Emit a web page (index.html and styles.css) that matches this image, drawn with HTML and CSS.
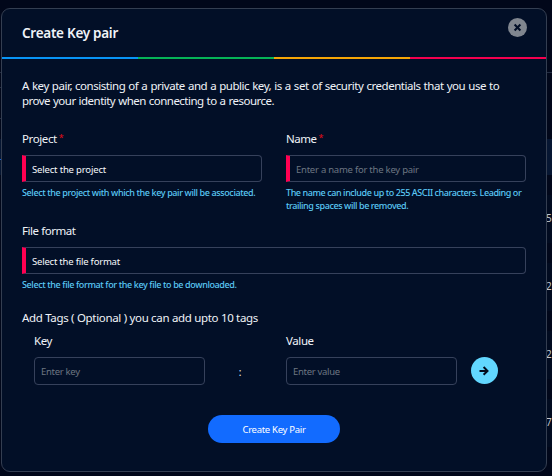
FILE: index.html
```html
<!DOCTYPE html>
<html lang="en">
<head>
<meta charset="utf-8">
<title>Create Key pair</title>
<link rel="stylesheet" href="styles.css">
</head>
<body>
<div class="backdrop">
  <div class="rule first"></div>
  <div class="rule second"></div>
  <div class="rule third"></div>
  <div class="band"></div>
  <div class="rows">
    <div class="row">5</div>
    <div class="row">2</div>
    <div class="row">2</div>
    <div class="row">7</div>
  </div>
</div>
<main class="modal">
  <header class="header">
    <h1 class="title"><span>Create Key pair</span></h1>
    <button class="close" aria-label="Close">
      <svg width="19" height="19" viewBox="0 0 19 19"><path d="M6.6 6.6l5.8 5.8M12.4 6.6l-5.8 5.8" stroke="#020f27" stroke-width="2.1"/></svg>
    </button>
  </header>
  <div class="stripe"><i class="blue"></i><i class="green"></i><i class="amber"></i><i class="red"></i></div>
  <div class="body">
    <p class="intro"><span class="intro-a">A key pair, consisting of a private and a public key, is a set of security credentials that you use to</span><br><span class="intro-b">prove your identity when connecting to a resource.</span></p>
    <div class="pair">
      <div class="field">
        <div class="label"><span class="l-project">Project</span><sup>*</sup></div>
        <div class="input required"><span class="v-project">Select the project</span></div>
        <div class="help"><span class="h-project">Select the project with which the key pair will be associated.</span></div>
      </div>
      <div class="field">
        <div class="label"><span class="l-name">Name</span><sup>*</sup></div>
        <div class="input required hint"><span class="v-name">Enter a name for the key pair</span></div>
        <div class="help"><span class="h-name">The name can include up to 255 ASCII characters. Leading or</span><br><span class="h-name2">trailing spaces will be removed.</span></div>
      </div>
    </div>
    <div class="field format">
      <div class="label"><span class="l-format">File format</span></div>
      <div class="input required"><span class="v-format">Select the file format</span></div>
      <div class="help"><span class="h-format">Select the file format for the key file to be downloaded.</span></div>
    </div>
    <div class="tags-title"><span class="l-tags">Add Tags ( Optional ) you can add upto 10 tags</span></div>
    <div class="tags">
      <div class="tag-field">
        <div class="label"><span class="l-key">Key</span></div>
        <div class="input hint"><span class="v-key">Enter key</span></div>
      </div>
      <span class="colon">:</span>
      <div class="tag-field">
        <div class="label"><span class="l-value">Value</span></div>
        <div class="input hint"><span class="v-value">Enter value</span></div>
      </div>
      <button class="add" aria-label="Add tag">
        <svg width="27" height="27" viewBox="0 0 27 27"><path d="M8.5 13.9h8M12.6 10l3.9 3.9-3.9 3.9" fill="none" stroke="#020b1c" stroke-width="2"/></svg>
      </button>
    </div>
    <button class="submit"><span class="l-submit">Create Key Pair</span></button>
  </div>
</main>
</body>
</html>
```
FILE: styles.css
```css
* { box-sizing: border-box; }
body {
  margin: 0;
  width: 552px;
  height: 476px;
  overflow: hidden;
  padding: 8px 0 0 1px;
  background: #01071a;
  color: #f0f3f8;
  font-family: "Noto Sans", "Open Sans", sans-serif;
}
span { white-space: nowrap; }
button { border: 0; padding: 0; font-family: inherit; }
.backdrop { position: absolute; inset: 0; overflow: hidden; }
.rule { position: absolute; height: 1px; background: #232d43; }
.first { top: 72px; left: 0; width: 552px; }
.second { top: 87px; left: 0; width: 2px; }
.third { top: 118px; left: 0; width: 2px; }
.band { position: absolute; top: 139px; left: 0; right: 0; height: 36px; background: #061632; }
.band::after { content: ""; position: absolute; top: 20px; left: 0; width: 2px; height: 1px; background: #1263d8; }
.rows { position: absolute; top: 195px; left: 546px; display: grid; gap: 20px; }
.row {
  width: 30px;
  height: 48px;
  background: #010b20;
  font-size: 10px;
  line-height: 46px;
  color: #c4c8ce;
}
.modal {
  position: relative;
  width: 546px;
  height: 463.5px;
  border: 1px solid #343e51;
  border-radius: 9px;
  background: #020f27;
}
.header {
  height: 48px;
  padding: 0 19px 0 20px;
  display: flex;
  align-items: center;
  justify-content: space-between;
}
.title { margin: 0; font-size: 13.5px; font-weight: 600; line-height: 20px; letter-spacing: -0.28px; }
.close { width: 19px; height: 19px; margin-bottom: 11px; border-radius: 50%; background: #80868f; }
svg { display: block; }
.stripe { display: grid; grid-template-columns: repeat(4, 1fr); height: 2px; }
.blue { background: #0894f5; }
.green { background: #05b357; }
.amber { background: #f5a506; }
.red { background: #f3004f; }
.body { padding: 19px 20px 0; }
.intro { margin: 0; font-size: 11.5px; line-height: 15px; word-spacing: 0.5px; }
.intro-a { letter-spacing: -0.46px; }
.intro-b { letter-spacing: -0.52px; }
.pair { display: grid; grid-template-columns: 240px 240px; gap: 24px; margin-top: 23px; height: 92px; }
.label { display: flex; font-size: 11.5px; line-height: 16px; height: 24px; }
.l-project { letter-spacing: -0.4px; }
.l-name { letter-spacing: -0.5px; }
.l-format { letter-spacing: -0.45px; }
.l-key, .l-value { letter-spacing: -0.4px; }
sup { margin-left: 2px; font-size: 9px; line-height: 14px; color: #e20b16; }
.input {
  height: 27px;
  border: 1px solid #36415b;
  border-radius: 4px;
  padding-left: 6px;
  font-size: 9.5px;
  line-height: 27px;
  color: #f7f9fc;
}
.v-project { letter-spacing: -0.17px; }
.v-name { letter-spacing: -0.24px; }
.v-format { letter-spacing: -0.21px; }
.v-key, .v-value { letter-spacing: -0.3px; }
.required { border-left: 4px solid #ff0052; border-top-left-radius: 0; border-bottom-left-radius: 0; }
.hint { color: #6d7682; }
.help { padding-top: 4px; font-size: 9px; font-weight: 500; line-height: 13px; color: #5ac8f5; }
.h-project { letter-spacing: -0.38px; }
.h-name { letter-spacing: -0.42px; }
.h-name2 { letter-spacing: -0.4px; }
.h-format { letter-spacing: -0.38px; }
.tags-title { font-size: 11.5px; line-height: 16px; margin-top: 19px; letter-spacing: -0.32px; }
.tags { display: flex; margin-top: 7px; padding-left: 12px; }
.tag-field { width: 171px; }
.tag-field .input { height: 28px; }
.colon { width: 81px; padding: 31px 11px 0 0; text-align: center; font-size: 10px; line-height: 16px; }
.tags .label { height: 24px; }
.add { width: 27px; height: 27px; margin: 24px 0 0 14px; border-radius: 50%; background: #62d7ff; }
.submit {
  display: block;
  width: 132px;
  height: 28px;
  margin: 30px 0 0 186px;
  border-radius: 14px;
  background: #126bff;
  color: #fff;
  font-size: 9.5px;
  line-height: 29px;
  letter-spacing: -0.29px;
}
```
